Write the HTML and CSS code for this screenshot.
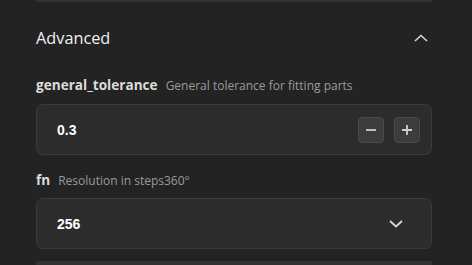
FILE: index.html
```html
<!DOCTYPE html>
<html>
<head>
<meta charset="utf-8">
<link rel="stylesheet" href="styles.css">
</head>
<body>
<div class="panel">
  <div class="strip"></div>
  <div class="section-head">
    <span class="section-title">Advanced</span>
    <svg class="chev" width="14" height="8" viewBox="0 0 14 8"><path d="M1 7 L7 1.5 L13 7" fill="none" stroke="#d8d8d8" stroke-width="1.6"/></svg>
  </div>
  <div class="field">
    <div class="label"><span class="name">general_tolerance</span><span class="desc">General tolerance for fitting parts</span></div>
    <div class="box">
      <span class="value">0.3</span>
      <div class="steppers">
        <button class="step"><svg width="12" height="12" viewBox="0 0 12 12"><path d="M1 6 H11" stroke="#cfcfcf" stroke-width="1.8"/></svg></button>
        <button class="step"><svg width="12" height="12" viewBox="0 0 12 12"><path d="M1 6 H11 M6 1 V11" stroke="#cfcfcf" stroke-width="1.8"/></svg></button>
      </div>
    </div>
  </div>
  <div class="field">
    <div class="label"><span class="name">fn</span><span class="desc">Resolution in steps360°</span></div>
    <div class="box">
      <span class="value">256</span>
      <svg class="down" width="14" height="8" viewBox="0 0 14 8"><path d="M1 1 L7 6.5 L13 1" fill="none" stroke="#d8d8d8" stroke-width="1.8"/></svg>
    </div>
  </div>
  <div class="strip bottom"></div>
</div>
</body>
</html>
```
FILE: styles.css
```css
html, body {
  margin: 0;
  padding: 0;
  background: #232323;
  width: 472px;
  height: 265px;
  overflow: hidden;
}
.panel {
  margin: 0 40px 0 36px;
  display: flex;
  flex-direction: column;
  font-family: "Open Sans", sans-serif;
}
.strip {
  height: 2px;
  background: #323232;
}
.strip.bottom {
  margin-top: 12px;
  height: 4px;
}
.section-head {
  display: flex;
  align-items: center;
  justify-content: space-between;
  height: 72px;
}
.section-title {
  color: #f0f0f0;
  font-size: 16.3px;
}
.chev {
  margin-right: 4px;
}
.field {
  display: flex;
  flex-direction: column;
}
.field + .field {
  margin-top: 14px;
}
.label {
  display: flex;
  align-items: baseline;
  gap: 8px;
  height: 28px;
  line-height: 22px;
}
.name {
  color: #dcdcdc;
  font-weight: 700;
  font-size: 13.6px;
}
.desc {
  color: #9a9a9a;
  font-size: 12px;
}
.box {
  margin-top: 2px;
  height: 49px;
  border: 1px solid #3b3b3b;
  border-radius: 7px;
  background: #2c2c2c;
  display: flex;
  align-items: center;
  justify-content: space-between;
  padding: 0 11px 0 20px;
}
.field + .field .box {
  margin-top: 1px;
}
.value {
  color: #ffffff;
  font-family: "Liberation Sans", Arial, sans-serif;
  font-weight: 700;
  font-size: 14px;
}
.steppers {
  display: flex;
  gap: 10px;
}
.step {
  width: 26px;
  height: 26px;
  padding: 0;
  border: 1px solid #4a4a4a;
  border-radius: 4px;
  background: #3c3c3c;
  display: flex;
  align-items: center;
  justify-content: center;
}
.down {
  margin-right: 17px;
}
```
